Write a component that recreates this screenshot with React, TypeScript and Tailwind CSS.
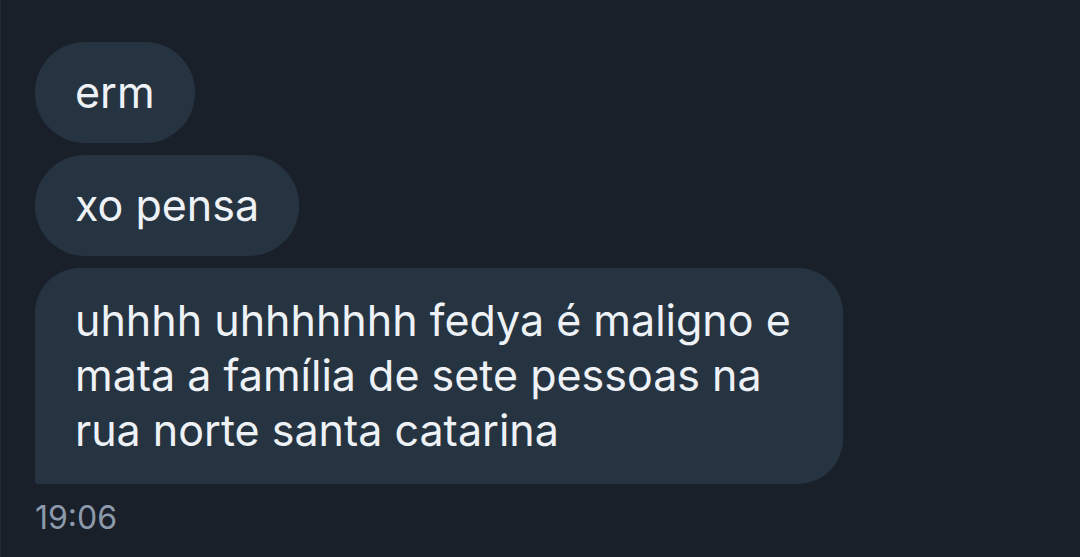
import React from "react";

export default function App() {
  return (
    <div
      className="w-[1080px] h-[557px] bg-[#19202a] overflow-hidden border-l border-[#222a35]"
      style={{ fontFamily: "Inter, 'Noto Sans', sans-serif" }}
    >
      <div className="flex flex-col items-start gap-[12px] pt-[42px] pl-[34px]">
        <div className="bg-[#263441] text-[#eef2f6] text-[43px] leading-[55px] px-[40px] py-[23px] rounded-[50px]">
          erm
        </div>
        <div className="bg-[#263441] text-[#eef2f6] text-[43px] leading-[55px] px-[40px] py-[23px] rounded-[50px]">
          xo pensa
        </div>
        <div className="bg-[#263441] text-[#eef2f6] text-[43px] leading-[55px] pl-[40px] pr-[40px] pt-[25px] pb-[26px] rounded-tl-[45px] rounded-tr-[45px] rounded-br-[45px] rounded-bl-[3px] w-[808px]">
          uhhhh uhhhhhhh fedya é maligno e mata a família de sete pessoas na rua norte santa catarina
        </div>
        <div className="text-[#8d9aab] text-[32px] leading-[40px] mt-[2px]">19:06</div>
      </div>
    </div>
  );
}
